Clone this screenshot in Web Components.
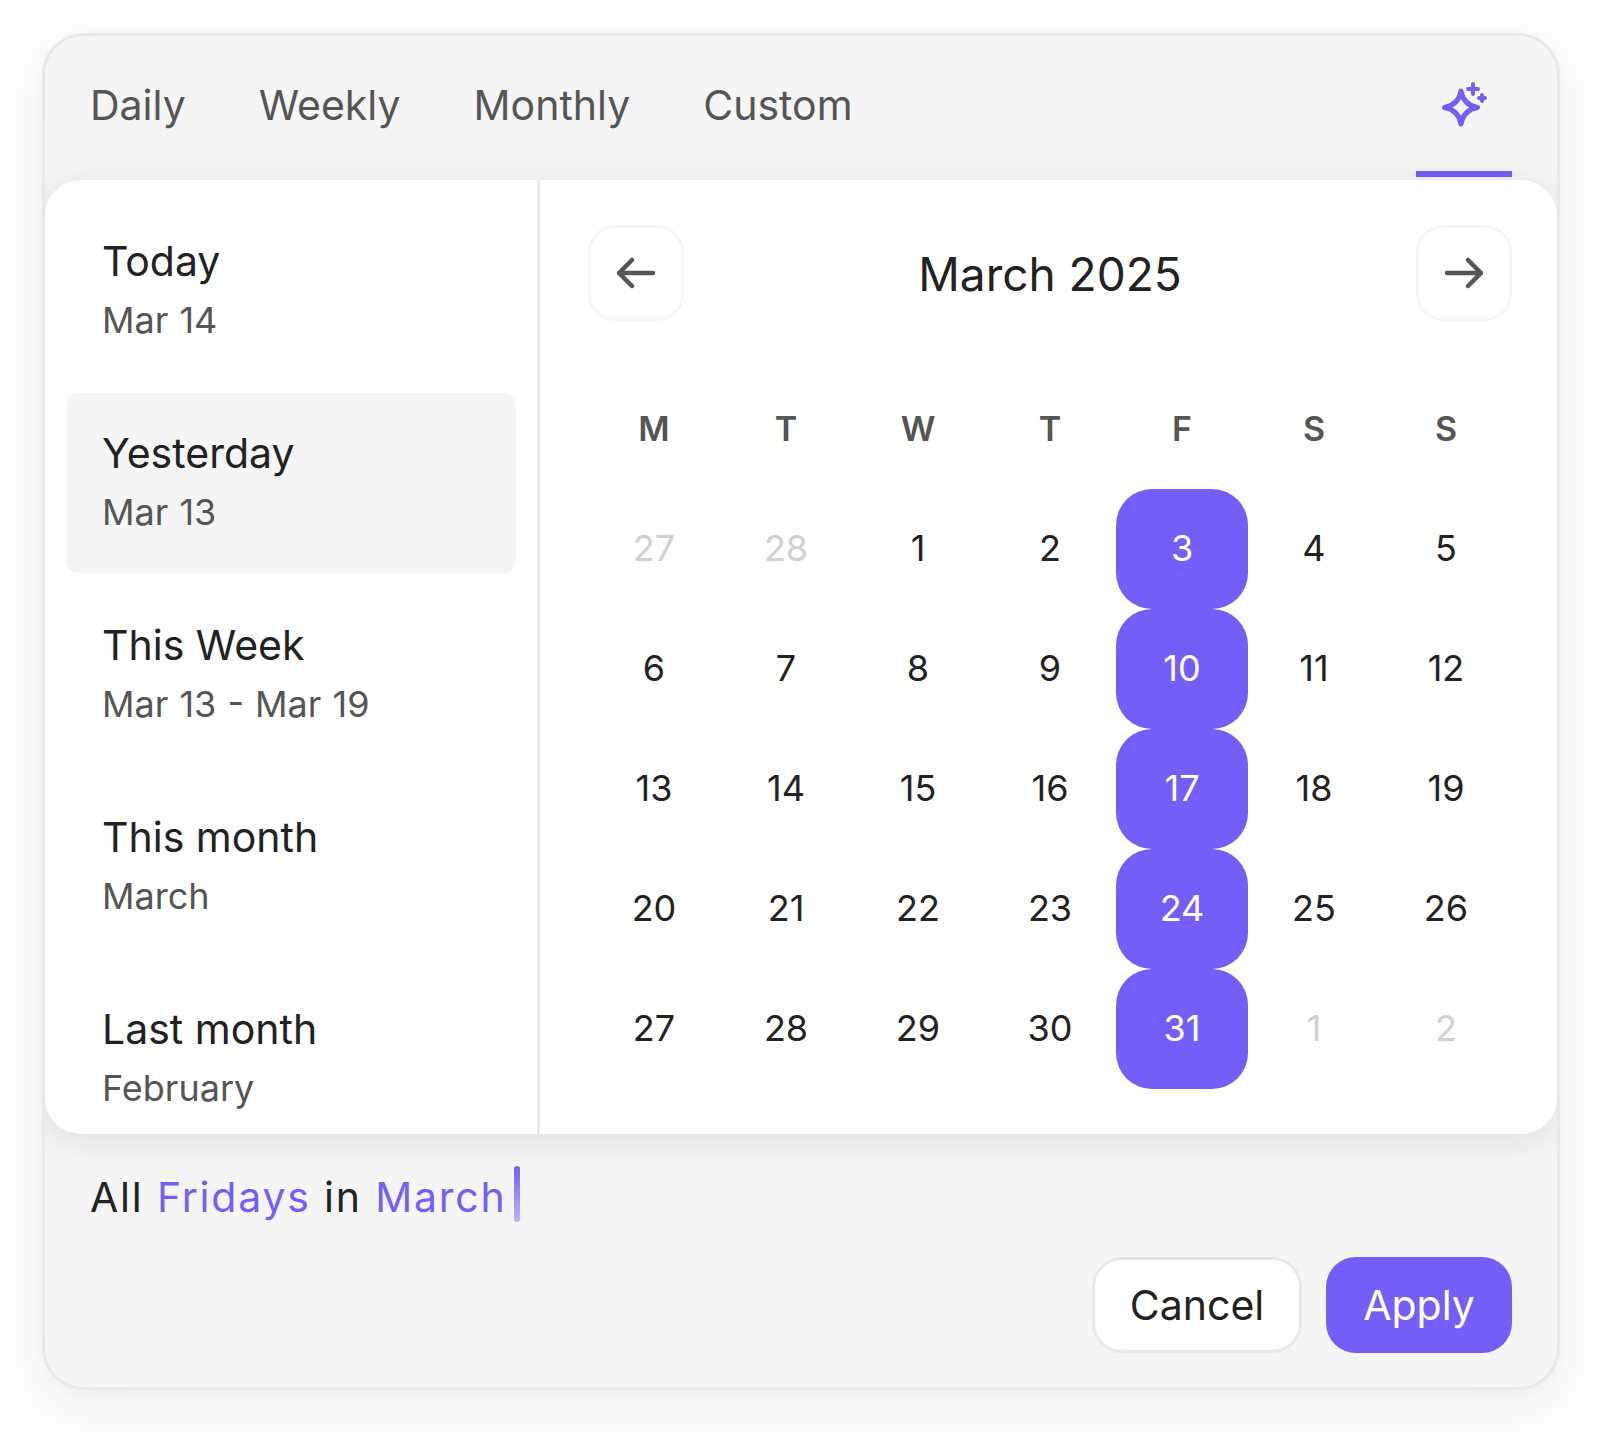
<!DOCTYPE html>
<html><head><meta charset="utf-8">
<style>
html,body{margin:0;background:#fff}
body{font-family:Inter,"Liberation Sans",sans-serif;color:#222}
</style></head><body>
<date-picker>
  <tab-bar slot="tabs">
    <tab-item>Daily</tab-item><tab-item>Weekly</tab-item><tab-item>Monthly</tab-item><tab-item>Custom</tab-item>
    <spark-tab slot="end"></spark-tab>
  </tab-bar>
  <picker-panel slot="panel">
    <preset-list slot="side">
      <preset-item label="Today" sub="Mar 14"></preset-item>
      <preset-item label="Yesterday" sub="Mar 13" selected></preset-item>
      <preset-item label="This Week" sub="Mar 13 - Mar 19"></preset-item>
      <preset-item label="This month" sub="March"></preset-item>
      <preset-item label="Last month" sub="February"></preset-item>
    </preset-list>
    <month-calendar slot="main"></month-calendar>
  </picker-panel>
  <summary-line slot="summary">All <em>Fridays</em> in <em>March</em></summary-line>
  <action-row slot="actions">
    <action-button>Cancel</action-button>
    <action-button primary>Apply</action-button>
  </action-row>
</date-picker>
<script>
function def(name, html, init){
  customElements.define(name, class extends HTMLElement{
    constructor(){super();const s=this.attachShadow({mode:'open'});s.innerHTML=typeof html==='function'?html(this):html;}
    connectedCallback(){ if(init) init(this); }
  });
}
const P='#735ff7';
def('date-picker',`<style>
:host{display:block;box-sizing:border-box;width:1602px;height:1440px;padding:33px 42px 50px 42px}
.card{box-sizing:border-box;height:1357px;width:1518px;background:#f5f5f5;border:3px solid #e8e8e8;border-radius:42px;
 box-shadow:0 16px 60px rgba(0,0,0,.075),0 2px 12px rgba(0,0,0,.025);display:flex;flex-direction:column;overflow:hidden}
.summary{padding:35px 0 0 45px;height:87px;box-sizing:border-box}
.actions{padding:36px 45px 0 0;display:flex;justify-content:flex-end}
</style><div class="card"><slot name="tabs"></slot><slot name="panel"></slot>
<div class="summary"><slot name="summary"></slot></div>
<div class="actions"><slot name="actions"></slot></div></div>`);
def('tab-bar',`<style>
:host{display:flex;height:144px;box-sizing:border-box;padding:0 45px;justify-content:space-between;align-items:flex-start}
.tabs{display:flex;gap:73px;align-items:flex-start;padding-top:44px}
</style><div class="tabs"><slot></slot></div><slot name="end"></slot>`);
def('tab-item',`<style>:host{display:block;font-size:41px;line-height:50px;color:#555}</style><slot></slot>`);
def('spark-tab',`<style>:host{display:flex;width:96px;height:141px;box-sizing:border-box;border-bottom:6px solid ${P};justify-content:center;align-items:flex-start;padding-top:42px}
svg{display:block}</style>
<svg width="54" height="50" viewBox="1 0 54 50" fill="none"><path d="M25 13C26.5 22 31.5 27.5 41.5 29.5C31.5 31.500 26.5 37 25 46C23.500 37 18.5 31.500 8.5 29.5C18.5 27.5 23.500 22 25 13Z" stroke="${P}" stroke-width="5" stroke-linejoin="round"/>
<path d="M32 11H42M37 6V16" stroke="${P}" stroke-width="4" stroke-linecap="round"/>
<path d="M43 20H49M46 17V23" stroke="${P}" stroke-width="4" stroke-linecap="round"/></svg>`);
def('picker-panel',`<style>:host{display:flex;flex:none;height:954px;background:#fff;border-radius:36px;position:relative;box-shadow:0 6px 36px rgba(0,0,0,.1)}
.side{width:492px;flex:none;border-right:3px solid #e8e8e8;overflow:hidden;border-radius:36px 0 0 36px}
.main{flex:1;min-width:0}
</style><div class="side"><slot name="side"></slot></div><div class="main"><slot name="main"></slot></div>`);
def('preset-list',`<style>:host{display:flex;flex-direction:column;gap:12px;padding:21px 21px 0 21px}</style><slot></slot>`);
def('preset-item',h=>`<style>:host{display:flex;flex-direction:column;flex:none;height:180px;box-sizing:border-box;padding:32px 36px 0;border-radius:12px;${h.hasAttribute('selected')?'background:#f5f5f5;':''}}
.l{font-size:41px;line-height:56px;color:#222}.s{font-size:36px;line-height:50px;margin-top:6px;color:#555;word-spacing:1px}</style>
<div class="l">${h.getAttribute('label')}</div><div class="s">${h.getAttribute('sub')}</div>`);
const arrow=d=>`<svg width="44" height="34" viewBox="0 0 44 34" fill="none"><path d="${d}" stroke="#555" stroke-width="4.500" stroke-linecap="round" stroke-linejoin="round"/></svg>`;
def('nav-button',h=>`<style>:host{display:flex;width:96px;height:96px;box-sizing:border-box;border:3px solid #f5f5f5;border-radius:27px;align-items:center;justify-content:center}svg{display:block}</style>`+arrow(h.getAttribute('dir')==='left'?'M39 17H5M18 4L5 17L18 30':'M5 17H39M26 4L39 17L26 30'));
def('day-cell',h=>{const t=h.getAttribute('k');
 return `<style>:host{display:flex;box-sizing:border-box;padding-bottom:2px;align-items:center;justify-content:center;height:120px;font-size:36px;color:${t==='m'?'#d0d0d0':t==='s'?'#fff':'#222'};${t==='s'?`background:${P};border-radius:36px;`:''}}</style><slot></slot>`});
def('month-calendar',()=>{
 const hd=['M','T','W','T','F','S','S'].map(x=>`<div class="h">${x}</div>`).join('');
 const days=[27,28,1,2,3,4,5,6,7,8,9,10,11,12,13,14,15,16,17,18,19,20,21,22,23,24,25,26,27,28,29,30,31,1,2];
 const cells=days.map((d,i)=>{const k=(i<2||i>32)?'m':(i%7===4?'s':'d');return `<day-cell k="${k}">${d}</day-cell>`}).join('');
 return `<style>:host{display:block;padding:45px 45px 0 48px}
 .top{display:flex;justify-content:space-between;align-items:center}
 .t{font-size:46px;line-height:60px;color:#222;padding-top:2px}
 .g{display:grid;grid-template-columns:repeat(7,132px)}
 .h{font-size:34px;font-weight:600;color:#555;text-align:center;height:60px;line-height:60px;margin-top:78px;margin-bottom:30px}
 </style><div class="top"><nav-button dir="left"></nav-button><div class="t">March 2025</div><nav-button dir="right"></nav-button></div>
 <div class="g">${hd}${cells}</div>`});
def('summary-line',`<style>:host{display:block;font-size:41px;line-height:56px;color:#222;letter-spacing:1.8px;position:relative;width:max-content}
::slotted(em){font-style:normal;color:${P}}
.c{display:inline-block;width:6px;height:56px;border-radius:3px;background:linear-gradient(${P},#bdb3fb);vertical-align:top;margin-left:7px;margin-top:-3px}</style><slot></slot><span class="c"></span>`);
def('action-row',`<style>:host{display:flex;gap:24px}</style><slot></slot>`);
def('action-button',h=>`<style>:host{display:flex;box-sizing:border-box;height:96px;align-items:center;justify-content:center;border-radius:30px;font-size:41px;
${h.hasAttribute('primary')?`background:${P};color:#fff;width:186px;`:'background:#fff;color:#222;border:3px solid #e8e8e8;width:210px;'}}</style><slot></slot>`);
</script>
</body></html>
